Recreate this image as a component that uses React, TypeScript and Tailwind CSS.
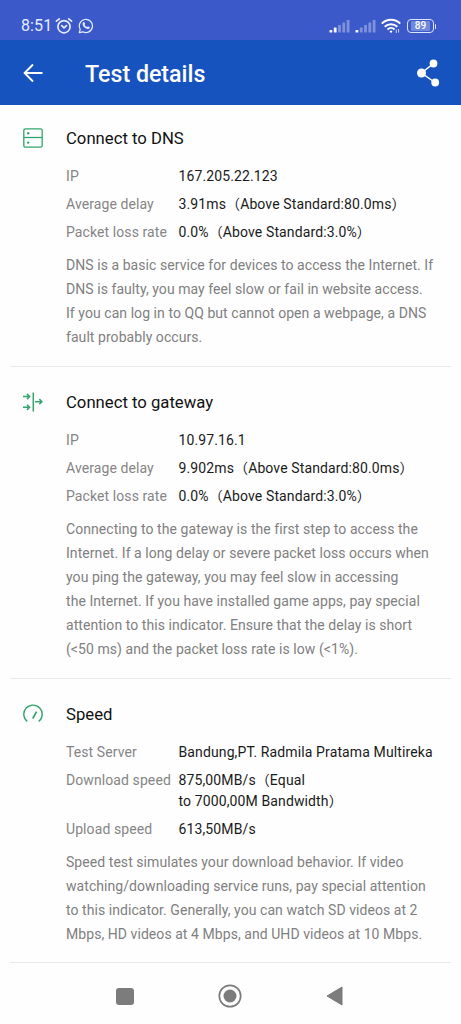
import React from 'react';

type Row = { label: string; value: string[] };

type SectionProps = {
  icon: React.ReactNode;
  title: string;
  rows: Row[];
  description: string[];
};

const SignalIcon = ({ strong }: { strong: number }) => (
  <svg width="22" height="14" viewBox="0 0 22 14" fill="#fff">
    {[2.5, 5, 7.5, 10, 12.5].map((h, i) => (
      <rect key={h} x={0.5 + i * 4.3} y={13.5 - h} width="2.8" height={h} rx="0.6" opacity={i < strong ? 0.95 : 0.35} />
    ))}
  </svg>
);

const StatusBar = () => (
  <div className="flex h-10 items-start justify-between bg-[#3b59c9] pl-[21px] pr-[25px] pt-4 text-[#e6ecff]">
    <div className="flex h-5 items-center">
      <span className="w-[31px] whitespace-nowrap text-[16px] leading-[22px] tracking-[0.1px]">8:51</span>
      <svg className="ml-[3px]" width="18" height="18" viewBox="0 0 18 18" fill="none" stroke="currentColor" strokeWidth="1.7" strokeLinecap="round">
        <circle cx="9" cy="9.7" r="6.1" />
        <path d="M1.4 4.2 4.3 1.8M16.6 4.2 13.7 1.8M6.7 8.6 9 10.8l2.5-2.2" />
      </svg>
      <svg className="ml-[5px]" width="16" height="16" viewBox="0 0 16 16" fill="none" stroke="currentColor" strokeWidth="1.2">
        <path d="M1.3 14.7 2.2 11.3A6.6 6.6 0 1 1 4.8 13.8Z" strokeLinejoin="round" />
        <path
          d="M5.2 4.3c.5-.5 1-.4 1.3.1l.6 1.3c.1.4-.5.8-.5 1.1.5 1.1 1.3 1.8 2.4 2.3.4 0 .7-.8 1.1-.7l1.4.7c.4.3.3 1-.2 1.4-.8.7-2 .6-3.5-.2C6.2 9.5 5 8 4.6 6.5 4.4 5.6 4.6 4.8 5.2 4.3Z"
          fill="currentColor"
          stroke="none"
        />
      </svg>
    </div>
    <div className="flex h-5 items-center">
      <SignalIcon strong={2} />
      <div className="ml-[4px]">
        <SignalIcon strong={1} />
      </div>
      <svg className="ml-[4px]" width="20" height="16" viewBox="0 0 20 16" fill="none" stroke="#fff" strokeWidth="2">
        <path d="M.8 5.6a13 13 0 0 1 18.4 0M3.7 8.7a9 9 0 0 1 12.6 0M6.5 11.5a5 5 0 0 1 7 0" />
        <circle cx="10" cy="13.6" r="1.2" fill="#fff" stroke="none" />
        <path d="M15.3 11.5v3.5M17.6 11v3.5" strokeWidth="1" opacity=".7" />
      </svg>
      <div className="ml-[6px] flex h-[14px] w-[27px] items-center justify-center rounded-[4px] border border-[#dce4ff] p-px">
        <div className="flex h-full w-[19px] items-center justify-center rounded-[1px] bg-[#7089dc] text-[10px] font-medium leading-none text-white">
          89
        </div>
      </div>
      <div className="ml-px h-[5px] w-px rounded bg-[#dce4ff]" />
    </div>
  </div>
);

const Header = () => (
  <div className="flex h-[65px] items-center bg-[#1653bf] pl-[23px] pr-[21px] text-white">
    <svg width="20" height="20" viewBox="0 0 20 20" fill="none" stroke="currentColor" strokeWidth="1.9">
      <path d="M19.5 10H2M10 1.5 1.6 10l8.4 8.5" />
    </svg>
    <h1 className="ml-[42px] pt-[3px] text-[23.2px] font-medium leading-8">Test details</h1>
    <svg className="ml-auto" width="24" height="28" viewBox="0 0 24 28" fill="currentColor">
      <path d="M17.5 4.5 5.5 14l13.5 9.5" fill="none" stroke="currentColor" strokeWidth="1.5" />
      <circle cx="17.5" cy="4.5" r="3.9" />
      <circle cx="5.5" cy="14" r="4.5" />
      <circle cx="19.2" cy="23.5" r="3.9" />
    </svg>
  </div>
);

const DnsIcon = () => (
  <svg width="20" height="20" viewBox="0 0 20 20" fill="none" stroke="#32a56c" strokeWidth="1.3">
    <rect x=".8" y=".8" width="18.4" height="18.4" rx="1.8" />
    <path d="M.8 9.5h18.4" />
    <circle cx="5.2" cy="5.3" r="1.2" fill="#32a56c" stroke="none" />
    <circle cx="5.2" cy="14.6" r="1.2" fill="#32a56c" stroke="none" />
  </svg>
);

const GatewayIcon = () => (
  <svg width="20" height="20" viewBox="0 0 20 20" fill="none" stroke="#32a56c" strokeWidth="1.5">
    <path d="M10.3.5v19" />
    <path d="M0 4.5h6.5M4 1.9 6.6 4.5 4 7.1M0 15.3h6.5M4 12.7 6.6 15.3 4 17.9M12 9.7h6.8M16.3 7.1 18.9 9.7l-2.6 2.6" />
  </svg>
);

const SpeedIcon = () => (
  <svg width="20" height="20" viewBox="0 0 20 20" fill="none" stroke="#32a56c" strokeWidth="1.4">
    <path d="M4.3 17.5A9.2 9.2 0 1 1 15.7 17.5" />
    <path d="M9.7 14.5 13.6 7.7" strokeWidth="1.7" />
  </svg>
);

const Section = ({ icon, title, rows, description }: SectionProps) => (
  <section className="mx-[10px] flex border-b border-[#e9e9e9] pb-[17px] pl-[13px] pt-6 last:pb-4">
    <div className="mt-px w-[43px] shrink-0">{icon}</div>
    <div>
      <h2 className="text-[16.7px] leading-6 text-[#111]">{title}</h2>
      <dl className="mt-[15px] flex flex-col gap-2 text-[14px] leading-5">
        {rows.map((row) => (
          <div key={row.label} className="flex whitespace-nowrap">
            <dt className="w-[112.5px] shrink-0 tracking-[0.09px] text-[#858585]">{row.label}</dt>
            <dd className="flex flex-col gap-px tracking-[0.12px] text-[#1a1a1a]">
              {row.value.map((line) => (
                <span key={line}>{line}</span>
              ))}
            </dd>
          </div>
        ))}
      </dl>
      <p className="mt-[11px] whitespace-nowrap text-[14px] leading-6 tracking-[0.06px] text-[#808080]">
        {description.map((line) => (
          <span key={line} className="block">
            {line}
          </span>
        ))}
      </p>
    </div>
  </section>
);

const sections: SectionProps[] = [
  {
    icon: <DnsIcon />,
    title: 'Connect to DNS',
    rows: [
      { label: 'IP', value: ['167.205.22.123'] },
      { label: 'Average delay', value: ['3.91ms（Above Standard:80.0ms）'] },
      { label: 'Packet loss rate', value: ['0.0%（Above Standard:3.0%）'] },
    ],
    description: [
      'DNS is a basic service for devices to access the Internet. If',
      'DNS is faulty, you may feel slow or fail in website access.',
      'If you can log in to QQ but cannot open a webpage, a DNS',
      'fault probably occurs.',
    ],
  },
  {
    icon: <GatewayIcon />,
    title: 'Connect to gateway',
    rows: [
      { label: 'IP', value: ['10.97.16.1'] },
      { label: 'Average delay', value: ['9.902ms（Above Standard:80.0ms）'] },
      { label: 'Packet loss rate', value: ['0.0%（Above Standard:3.0%）'] },
    ],
    description: [
      'Connecting to the gateway is the first step to access the',
      'Internet. If a long delay or severe packet loss occurs when',
      'you ping the gateway, you may feel slow in accessing',
      'the Internet. If you have installed game apps, pay special',
      'attention to this indicator. Ensure that the delay is short',
      '(<50 ms) and the packet loss rate is low (<1%).',
    ],
  },
  {
    icon: <SpeedIcon />,
    title: 'Speed',
    rows: [
      { label: 'Test Server', value: ['Bandung,PT. Radmila Pratama Multireka'] },
      { label: 'Download speed', value: ['875,00MB/s（Equal', 'to 7000,00M Bandwidth）'] },
      { label: 'Upload speed', value: ['613,50MB/s'] },
    ],
    description: [
      'Speed test simulates your download behavior. If video',
      'watching/downloading service runs, pay special attention',
      'to this indicator. Generally, you can watch SD videos at 2',
      'Mbps, HD videos at 4 Mbps, and UHD videos at 10 Mbps.',
    ],
  },
];

const NavBar = () => (
  <div className="flex flex-1 items-center justify-between pb-[3px] pl-[116px] pr-[118px] pt-[8px]">
    <div className="h-[17px] w-[18px] rounded-[3px] bg-[#7c7c7c]" />
    <svg width="24" height="24" viewBox="0 0 24 24">
      <circle cx="12" cy="12" r="10.7" fill="none" stroke="#7c7c7c" strokeWidth="1.7" />
      <circle cx="12" cy="12" r="6.5" fill="#7c7c7c" />
    </svg>
    <svg width="17" height="20" viewBox="0 0 17 20">
      <path d="M16 1v18L1 10Z" fill="#7c7c7c" stroke="#7c7c7c" strokeLinejoin="round" />
    </svg>
  </div>
);

function App() {
  return (
    <div className="flex h-[1024px] w-[461px] flex-col overflow-hidden bg-[#fefefe] font-['Roboto','Noto_Sans_CJK_SC',sans-serif]">
      <StatusBar />
      <Header />
      <main className="-mt-[2px]">
        {sections.map((section) => (
          <Section key={section.title} {...section} />
        ))}
      </main>
      <NavBar />
    </div>
  );
}

export default App;
